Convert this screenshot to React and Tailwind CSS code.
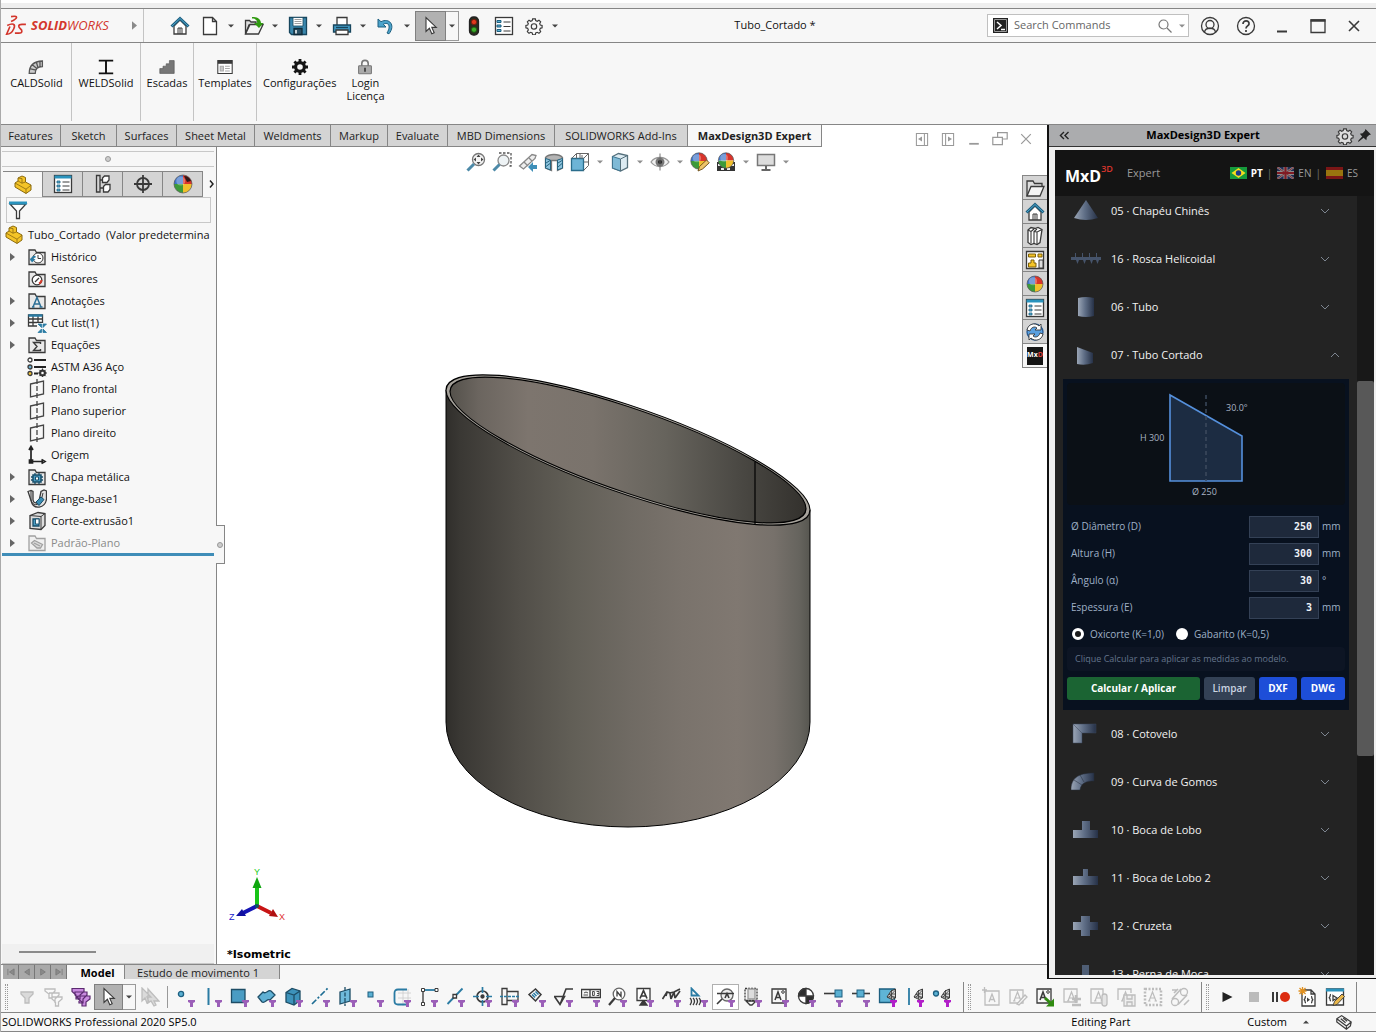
import { useState } from 'react'

const K = '#3a3a3a'
const B = '#2a7ba3'

// small purple funnel that marks the selection filters
function Funnel({ color = '#9b5fb8' }) {
    return <path d="M12 13h7v2l-2 1v4h-3v-4l-2-1z" fill={color} />
}

function Svg({ size = 20, children, className = '', dim = false }) {
    return (
        <svg
            viewBox="0 0 20 20"
            width={size}
            height={size}
            fill="none"
            stroke={K}
            strokeWidth="1.300"
            className={`shrink-0 ${dim ? 'opacity-30' : ''} ${className}`}
            aria-hidden="true"
        >
            {children}
        </svg>
    )
}

function Caret({ className = '' }) {
    return (
        <svg viewBox="0 0 6 4" width="6" height="4" className={className} aria-hidden="true">
            <path d="M0 0.500h6L3 3.500z" fill="#444" />
        </svg>
    )
}

function Sphere({ cx = 10, cy = 10, r = 8 }) {
    return (
        <g stroke="none">
            <path d={`M${cx} ${cy}V${cy - r}A${r} ${r} 0 0 1 ${cx + r} ${cy}z`} fill="#d9342b" />
            <path d={`M${cx} ${cy}H${cx + r}A${r} ${r} 0 0 1 ${cx} ${cy + r}z`} fill="#f0c02c" />
            <path d={`M${cx} ${cy}V${cy + r}A${r} ${r} 0 0 1 ${cx - r} ${cy}z`} fill="#3c9a3a" />
            <path d={`M${cx} ${cy}H${cx - r}A${r} ${r} 0 0 1 ${cx} ${cy - r}z`} fill="#3f74c9" />
            <circle cx={cx - r / 4} cy={cy - r / 3} r={r / 2} fill="#fff" opacity="0.3" />
            <circle cx={cx} cy={cy} r={r} stroke="#555" strokeWidth="0.700" />
        </g>
    )
}

function ArrowShape({ fill = '#fff' }) {
    return <path d="M5 1.500v14l3.400-3.200 2.400 5.500 2.400-1.100-2.400-5.300h4.500z" fill={fill} strokeWidth="1.100" />
}

const house = (
    <>
        <path d="M4 10v8h12v-8l-6-6z" fill="#fff" />
        <path d="M8 18v-6h4v6M10 12v6" strokeWidth="1" />
        <path d="M1.500 10.500L10 2.500l8.500 8" stroke="#1d5f80" strokeWidth="3" />
        <path d="M2 10l8-7.500L18 10" stroke="#4fa6cc" strokeWidth="1" />
    </>
)

const listPanel = (
    <>
        <rect x="1.500" y="1.500" width="17" height="17" fill="#fff" />
        <path d="M3 4.500h4v2H3zM3 9h4v2H3zM3 13.500h4v2H3z" fill="#5ab0d2" stroke="#1d5f80" strokeWidth="1" />
        <path d="M9.500 6h7M9.500 10.500h7M9.500 15h7" strokeWidth="1" />
    </>
)

const windowPanel = (
    <>
        <rect x="1.500" y="1.500" width="17" height="17" fill="#fff" />
        <path d="M1.500 3h17" stroke="#2a93bd" strokeWidth="3" />
        <path d="M4 7h3v2H4zM4 11h3v2H4zM4 15h3v2H4z" fill="#5ab0d2" stroke="#1d5f80" strokeWidth="0.800" />
        <path d="M9.500 8h7M9.500 12h7M9.500 16h7" strokeWidth="1" />
    </>
)

const gear = (
    <>
        <path d="M8.500 2h3l.4 2 1.700.7 1.900-1.200 1.900 2-1.100 1.800.7 1.700 2 .500v2.600l-2 .5-.7 1.700 1.100 1.900-1.900 1.900-1.900-1.100-1.700.7-.4 2h-3l-.5-2-1.700-.7-1.800 1.100-1.900-1.900 1.100-1.900-.7-1.700-2-.5V9.500l2-.5.7-1.700-1.100-1.800 1.900-2 1.800 1.200L8 4z" />
        <circle cx="10" cy="10.500" r="3" />
    </>
)

const folder = <path d="M2 17.500V3h6l1.500 2.500H18v12z" fill="#e9e9e9" />

const partIcon = (
    <path d="M2 8l3-2V3l4-2 3.500 1.500V7L18 10v5l-5 3.500L2 12z" fill="#f4c427" stroke="#8a6a10" strokeWidth="1" />
)

const partLines = <path d="M5 6l4 2.200v-4.600L5 3m4 5.200L12.500 7M2 8l11 6.200v4M13 14.200l5-4" stroke="#8a6a10" strokeWidth="0.800" />

const iconsTop = {
    home: house,
    doc: <path d="M3.500 1.500h9l4 4v13h-13zM12.500 1.500v4h4" fill="#fff" />,
    open: (
        <>
            <path d="M1.500 18V4.500h4L7 6h5v3l-7 0z" fill="#ddd" />
            <path d="M1.500 18L6 8.500h13L14.500 18z" fill="#f4f4f4" />
            <path d="M8 2.500c4 0 5 2 5.200 4.500H10l5 5 4.500-5h-2.500C16.500 2.500 13 1 8 1z" fill="#2f9a0f" stroke="none" />
        </>
    ),
    save: (
        <>
            <path d="M1.500 1.500h17v17h-15l-2-2z" fill="#3a87ad" stroke="#17465e" />
            <path d="M5 1.500h10V10H5z" fill="#fff" stroke="#17465e" strokeWidth="0.800" />
            <path d="M6.500 3.500h7M6.500 5.500h7M6.500 7.500h7" stroke="#888" strokeWidth="0.800" />
            <path d="M6 12.500h8v6H6z" fill="#2b5266" stroke="#102b3a" />
            <path d="M8 14v3.500" stroke="#fff" strokeWidth="1.500" />
        </>
    ),
    print: (
        <>
            <path d="M5 9V1.500h10V9" fill="#fff" />
            <path d="M1.500 9h17v7h-17z" fill="#3f96bf" stroke="#17465e" />
            <path d="M4 14h12v4.500H4z" fill="#fff" />
            <path d="M4 11.500h12" stroke="#17465e" />
        </>
    ),
    undo: (
        <path d="M2 3v8h8L7.300 8.300C12 5.500 15.500 9.500 11 17l2 .8C20 9 13 1.500 5 5.700z" fill="#4ba3cb" stroke="#1d5f80" strokeWidth="1" />
    ),
    arrow: <ArrowShape />,
    light: (
        <>
            <rect x="5.500" y="1" width="9" height="18" rx="4" fill="#2c2c1e" stroke="#222" />
            <circle cx="10" cy="6" r="2.600" fill="#e23a1d" stroke="#7a150a" strokeWidth="0.800" />
            <circle cx="10" cy="13.700" r="2.600" fill="#3fae2c" stroke="#155a0e" strokeWidth="0.800" />
        </>
    ),
    list: listPanel,
    gear,
}

const headsUp = {
    zoomFit: (
        <>
            <circle cx="12.500" cy="7.500" r="6" fill="#f4f4f4" stroke="#777" />
            <path d="M12.500 2.500l2 2.500h-4zM12.500 12.500l2-2.500h-4zM7.500 7.500l2.500-2v4zM17.500 7.500l-2.500-2v4z" fill="#444" stroke="none" />
            <path d="M8 12l-6.500 6.500" stroke="#4d8aa8" strokeWidth="3" />
        </>
    ),
    zoomArea: (
        <>
            <path d="M7 1h12v13h-3" strokeDasharray="2.500 1.500" stroke="#555" />
            <circle cx="11.500" cy="8.500" r="5.500" fill="#eef3f5" stroke="#888" />
            <path d="M7.500 12.500l-6 6" stroke="#4d8aa8" strokeWidth="3" />
        </>
    ),
    previous: (
        <>
            <path d="M1.500 14L14 2.500l4 1-1 3L5.500 17z" fill="#eee" stroke="#888" />
            <path d="M6 10l4 4M11 6l3 3" stroke="#888" />
            <path d="M19 13h-4v-3l-5 5 5 5v-3h4z" fill="#3f8fb8" stroke="none" />
        </>
    ),
    section: (
        <>
            <path d="M1.500 5.500C5 1.500 15 1.500 18.500 5.500V16l-5 2.500V8.500h-6v10l-6-2.500z" fill="#b4b4b4" stroke="#777" />
            <path d="M1.500 6.500l5 1.500v10l-5-2zM18.500 6.500l-5 1.500v10l5-2z" fill="#8cc3dd" stroke="#26637f" strokeWidth="1" />
            <path d="M2 11l4-2.500M2 14.500l4-3M14 11l4-2.500M14 15l4-3.500" stroke="#26637f" strokeWidth="1" />
        </>
    ),
    orient: (
        <>
            <path d="M1.500 6.500h12v12h-12z" fill="#6db4d6" stroke="#2a6d8c" />
            <path d="M1.500 6.500l5-5h12v12l-5 5M13.500 6.500l5-5M6.500 1.500v5M10 1.500v5M14 10h4.500M12 3v4" stroke="#666" strokeWidth="1" />
        </>
    ),
    display: (
        <>
            <path d="M2.500 4.500l6-3 9 2v12l-7 3.500-8-3z" fill="#dcebf2" stroke="#55707c" />
            <path d="M2.500 4.500l8 2.500v12l-8-3z" fill="#7fbad6" stroke="#3f7590" strokeWidth="1" />
            <path d="M10.500 7l7-3.500M10.500 7v12" stroke="#55707c" strokeWidth="1" />
        </>
    ),
    eye: (
        <>
            <path d="M1 10c4-6 14-6 18 0-4 6-14 6-18 0z" fill="#f1f1f1" stroke="#999" />
            <circle cx="10" cy="10" r="4.500" fill="#777" stroke="none" />
            <circle cx="10" cy="10" r="2" fill="#222" stroke="none" />
            <path d="M10 1.500v17" stroke="#666" strokeWidth="0.900" />
        </>
    ),
    appearance: (
        <>
            <Sphere cx={9} cy={9} r={8.2} />
            <path d="M8 19l1.500-4.500L16.500 8l2.800 2.800L12.500 17z" fill="#eec56a" stroke="#6b4d18" strokeWidth="0.900" />
        </>
    ),
    scene: (
        <>
            <path d="M1 10h18v9H1z" fill="#333" stroke="none" />
            <path d="M2 12h3v2H2zM5 16h3v2H5zM11 16h3v2h-3zM15 12h3v2h-3z" fill="#eee" stroke="none" />
            <Sphere cx={10} cy={8.5} r={7.7} />
        </>
    ),
    monitor: (
        <>
            <path d="M1.500 2.500h17v11h-17z" fill="#ddd" stroke="#777" strokeWidth="1.500" />
            <path d="M10 14v4M5.500 18h9" stroke="#666" strokeWidth="2" />
        </>
    ),
}

const treeIcons = {
    history: (
        <>
            {folder}
            <circle cx="11" cy="11" r="5" fill="#fff" strokeWidth="1" />
            <path d="M11 8v3.500h3" strokeWidth="1" />
            <path d="M4.500 13.500c0-3 2-4 4-3.500" stroke={B} strokeWidth="2" />
            <path d="M2.500 11.500l2.500 4 3.500-3.500z" fill={B} stroke="none" />
        </>
    ),
    sensor: (
        <>
            {folder}
            <circle cx="10" cy="11" r="4.800" fill="#fff" />
            <path d="M8 13l4-4" />
            <path d="M12 14.500a4 4 0 0 0 2.500-3.500" stroke="#d43a2a" strokeWidth="2" />
        </>
    ),
    note: (
        <>
            {folder}
            <path d="M6 16l4-9.500 4 9.500M7.500 13h5M5 16h2.500M12.500 16h3" stroke="#2d6f95" strokeWidth="1.500" />
        </>
    ),
    cut: (
        <>
            <path d="M1.500 2h14v11h-14zM1.500 6h14M1.500 9.500h14M6 2v11M11 2v11" fill="#fff" />
            <path d="M1.500 2.500h14" stroke={B} strokeWidth="2.500" />
            <path d="M10 10h10v10H10z" fill="#f7f7f7" stroke="none" />
            <path d="M11 11h3.500v3.500zM19.500 11H16v3.500zM11 19.500h3.500V16zM19.500 19.500H16V16z" fill={B} stroke={B} strokeWidth="0.800" />
        </>
    ),
    equation: (
        <>
            {folder}
            <path d="M13.500 9V7.500h-7l3.500 4-3.500 4h7V14" strokeWidth="1.400" />
        </>
    ),
    material: (
        <>
            <circle cx="3" cy="3" r="2" fill="#fff" />
            <circle cx="3" cy="10" r="2" fill="#67aed0" />
            <circle cx="3" cy="16.500" r="2" fill="#f1c232" />
            <path d="M7 3h12M7 10h12M7 16.500h4" stroke="#222" strokeWidth="2.200" />
            <circle cx="15.500" cy="16" r="2.500" stroke="#333" strokeWidth="2" />
            <path d="M15.500 11.500v9M11 16h9M12.300 12.800l6.400 6.400M18.700 12.800l-6.400 6.400" stroke="#333" strokeWidth="1" />
            <circle cx="15.500" cy="16" r="1.200" fill="#fff" stroke="none" />
        </>
    ),
    plane: (
        <>
            <path d="M3.500 5l13-3v13l-13 3z" stroke="#444" />
            <path d="M10 0v20" stroke="#444" strokeDasharray="5 2" />
        </>
    ),
    origin: (
        <path d="M4 3v13.500h12M2 5l2-3.500L6 5M14.500 14.500L18 16.500l-3.500 2M2.500 15h3v3h-3z" stroke="#222" strokeWidth="1.700" />
    ),
    sheet: (
        <>
            {folder}
            <path d="M6 8h8v7H6z" fill="#4a9cc3" stroke="#184f6b" strokeWidth="1.500" />
            <path d="M8 6v2M12 6v2M8 15v2M12 15v2M4 10h2M4 13h2M14 10h2M14 13h2" stroke="#184f6b" />
            <path d="M8.500 10h3v3h-3z" fill="#fff" stroke="#184f6b" strokeWidth="1" />
        </>
    ),
    flange: (
        <>
            <path d="M1 2.500L4 1.500l2 1V11c.5 3.500 5 4 6 1l2-9.500 3-1.500 2.500 1V10c-1 9-13 12-15.500 1.500z" fill="#e3e3e3" />
            <path d="M4 2v9c1 6 8 6 10 1l2-8" strokeWidth="1" />
            <path d="M9 13l5-5 3 2.500-5 6z" fill="#3a8db4" stroke="#184f6b" strokeWidth="1" />
        </>
    ),
    extrude: (
        <>
            <path d="M3 4.500l8-3 7 1v12l-4 4-11-1z" fill="#ddd" />
            <path d="M3 4.500l11 1 4-3M14 5.500v13" strokeWidth="1" />
            <path d="M6 8h6v7H6z" fill="#4a9cc3" stroke="#184f6b" />
            <path d="M8.500 8H12v5H8.500z" fill="#fff" stroke="#184f6b" strokeWidth="0.900" />
        </>
    ),
    flat: (
        <g opacity="0.450">
            {folder}
            <path d="M4.500 10l3-2.500 8 4-2 3.500H10z" fill="#bbb" />
            <path d="M7 10l6 3" />
        </g>
    ),
}

const tree = [
    { label: 'Histórico', icon: 'history', open: true },
    { label: 'Sensores', icon: 'sensor' },
    { label: 'Anotações', icon: 'note', open: true },
    { label: 'Cut list(1)', icon: 'cut', open: true },
    { label: 'Equações', icon: 'equation', open: true },
    { label: 'ASTM A36 Aço', icon: 'material' },
    { label: 'Plano frontal', icon: 'plane' },
    { label: 'Plano superior', icon: 'plane' },
    { label: 'Plano direito', icon: 'plane' },
    { label: 'Origem', icon: 'origin' },
    { label: 'Chapa metálica', icon: 'sheet', open: true },
    { label: 'Flange-base1', icon: 'flange', open: true },
    { label: 'Corte-extrusão1', icon: 'extrude', open: true },
    { label: 'Padrão-Plano', icon: 'flat', open: true },
]

const box = (x, y, s) => <rect x={x} y={y} width={s} height={s} fill="#5ab0d2" stroke="#1d5f80" strokeWidth="1" />

const mesh = (
    <>
        <path d="M9 10l4-6 4.500-2V11L14 12.500z" fill="#ddd" strokeWidth="1" />
        <path d="M9 10h8.500M11 7h6.500M13.500 3v9M11 7l6 4M17.500 3L11 10" strokeWidth="0.800" />
    </>
)

const letterA = <path d="M6 14l3.500-9 3.500 9M7.500 11h4M5 14h2.500M11.500 14h2.500" strokeWidth="1.200" />

const filters = [
    { name: 'Vértices', art: <circle cx="5" cy="7" r="2.600" fill="#5ab0d2" stroke="#1d5f80" /> },
    { name: 'Arestas', art: <path d="M5.500 1v17" stroke={B} strokeWidth="2" /> },
    { name: 'Faces', art: <path d="M1.500 2.500h13.500v13H1.500z" fill="#4a9cc3" stroke="#1d4d66" /> },
    { name: 'Superfícies', art: <path d="M1 10l5-5c3 3 5-3 8-1l4 4-5 5c-3-2-5 4-8 2z" fill="#5fb0d4" stroke="#1d4d66" /> },
    {
        name: 'Sólidos',
        art: (
            <>
                <path d="M2 5.500l6-4 8 2.500v9.500l-6 4.500-8-3z" fill="#3d93bb" stroke="#1d4d66" />
                <path d="M2 5.500L10 8l6-4M10 8v10" stroke="#1d4d66" />
            </>
        ),
    },
    { name: 'Eixos', art: <path d="M1 17L17 1" stroke="#1d6d93" strokeWidth="1.700" strokeDasharray="6 2 2 2" /> },
    {
        name: 'Planos',
        art: (
            <>
                <path d="M2 5l10-3v12L2 17z" fill="#6fbadb" stroke="#1d4d66" />
                <path d="M7 0v19" stroke="#1d4d66" strokeDasharray="4 1.500" />
            </>
        ),
    },
    { name: 'Pontos', art: box(3, 5, 5) },
    {
        name: 'Esboços',
        art: (
            <>
                <path d="M6 6h13M6 11h13M11 2v17M16 2v17" stroke="#ccc" strokeWidth="0.800" />
                <path d="M15 2.500H6Q2.500 2.500 2.500 6v8q0 3.500 3.500 3.500h9" stroke="#2a7ba3" strokeWidth="1.800" />
            </>
        ),
    },
    {
        name: 'Segmentos',
        art: (
            <>
                <path d="M4 3v14" />
                <path d="M4 3h13" stroke={B} strokeWidth="1.800" />
                <path d="M2.500 1.500h3v3h-3zM16 1.500h3v3h-3zM2.500 15.500h3v3h-3z" fill="#fff" strokeWidth="1" />
            </>
        ),
    },
    {
        name: 'Pontos médios',
        art: (
            <>
                <path d="M1.500 17L16.500 1.500" stroke={B} strokeWidth="1.800" />
                <path d="M7 7.500h3.500V11H7z" fill="#fff" />
            </>
        ),
    },
    {
        name: 'Marcas de centro',
        art: (
            <>
                <circle cx="9.500" cy="9.500" r="5.500" strokeWidth="1.700" />
                <path d="M9.500 0v6M9.500 13v6M0 9.500h6M13 9.500h6" stroke={B} strokeWidth="1.700" />
                <circle cx="9.500" cy="9.500" r="1.500" fill={K} />
            </>
        ),
    },
    {
        name: 'Linhas de centro',
        art: (
            <>
                <path d="M2 1.500h5v16H2zM7 4.500h11v9H7" />
                <path d="M0 9.500h19" stroke={B} strokeDasharray="3 1" />
            </>
        ),
    },
    {
        name: 'Cotas',
        art: (
            <>
                <path d="M2 7.500L8.500 2 14 7.500 8.500 14z" strokeWidth="1.500" />
                <path d="M5 7.500l3 3M6.500 6l3 3M8.500 4.500l3 3" stroke={B} strokeWidth="1.500" />
            </>
        ),
    },
    { name: 'Acabamento', art: <path d="M0.500 9.500h10L6 17.500zM6 17.500l6-15.500h7" strokeWidth="1.600" /> },
    {
        name: 'Tolerâncias',
        art: (
            <>
                <path d="M0.500 2.500h19v8h-19zM9 2.500v8" />
                <path d="M2.500 8h4.500M3 6q2-2 4 0M11.500 4.500h1.800v4h-1.800zM15.500 4.500H18v4h-2.500M16 6.500h2" strokeWidth="0.900" />
            </>
        ),
    },
    {
        name: 'Notas',
        art: (
            <>
                <circle cx="11" cy="7" r="5.800" fill="#fff" stroke="#666" />
                <path d="M9 9.500v-5l4 5v-5" />
                <path d="M7 11l-6 7" strokeWidth="2.200" />
            </>
        ),
    },
    {
        name: 'Texto',
        art: (
            <>
                <path d="M2 1.500h13v12H2z" fill="#fff" />
                <path d="M5 11.500l3.500-8 3.500 8M6.500 9h4" strokeWidth="1.700" />
                <path d="M8 14l-3 4h7l-3-4z" fill={K} />
            </>
        ),
    },
    { name: 'Soldas', art: <path d="M0.500 12L5 5l3 1 1 6M5 5l-1 4M8 6l4-1 1 6M12 5l6-3M12 5l-3 7M13 11l5-7" strokeWidth="1.700" /> },
    {
        name: 'Cordões',
        art: (
            <>
                <path d="M2.500 1.500v7H9.500z" stroke={B} strokeWidth="1.800" />
                <path d="M1 11q3 3 0 7M4 11q3 3 0 7M7 11q3 3 0 7M10 11q3 3 0 7" />
            </>
        ),
    },
    {
        name: 'Detalhes',
        on: true,
        art: (
            <>
                <circle cx="11" cy="8" r="6" fill="#eee" stroke="#666" />
                <path d="M1 6.500h17M9 11l2-4.500 2 4.500M6 12l-5 5" strokeWidth="1.600" />
            </>
        ),
    },
    {
        name: 'Furos',
        art: (
            <>
                <path d="M2 1.500h12v12H2z" strokeDasharray="2 1" />
                <path d="M5 2h7v10H5z" fill="#ddd" stroke="#999" />
                <path d="M3 14h10l-4 4H7z" />
            </>
        ),
    },
    {
        name: 'Blocos',
        art: (
            <>
                <path d="M2 2h14v14H2z" />
                <path d="M5 13l3-8 3 8M6 10.500h4" strokeWidth="1.500" />
                <circle cx="13" cy="5" r="1.300" strokeWidth="1" />
            </>
        ),
    },
    {
        name: 'Centro de massa',
        art: (
            <>
                <circle cx="9" cy="9" r="7.500" fill="#fff" />
                <path d="M9 9V1.500A7.500 7.500 0 0 0 1.500 9zM9 9v7.500A7.500 7.500 0 0 0 16.500 9z" fill="#2d2d2d" />
            </>
        ),
    },
    { name: 'Conexão', art: <><path d="M0 6.500h11" strokeWidth="1.600" />{box(11, 3, 7)}</> },
    { name: 'Rota', art: <><path d="M1 6.500h18" strokeWidth="1.600" />{box(6, 3, 7)}</> },
    {
        name: 'Malha de face',
        pink: true,
        art: (
            <>
                <path d="M1.500 2h15v13.500H1.500z" fill="#5fb4d6" stroke="#1d5f80" />
                {mesh}
            </>
        ),
    },
    { name: 'Malha de aresta', pink: true, art: <><path d="M4 1v17" stroke={B} strokeWidth="1.800" />{mesh}</> },
    {
        name: 'Malha de vértice',
        pink: true,
        art: (
            <>
                <circle cx="4" cy="6.500" r="2.500" fill="#5ab0d2" stroke="#1d5f80" />
                {mesh}
            </>
        ),
    },
]

const annotations = [
    { name: 'Nova nota', dim: true, art: <><path d="M4 4h14v14H4z" /><path d="M8 15l3-8 3 8M9 12.500h4M1 3h5M3.500 0v6" /></> },
    { name: 'Editar nota', dim: true, art: <><path d="M2 3h13v13H2z" />{letterA}<path d="M9 17l8-9 2 2-8 8z" fill="#fff" /></> },
    {
        name: 'Inserir nota',
        art: (
            <>
                <path d="M2 2h14v14H2z" />
                <path d="M5 13l3-8 3 8M6 10.500h4" strokeWidth="1.600" />
                <circle cx="13" cy="5" r="1.300" strokeWidth="1" />
                <path d="M11 10l5 4.500 3-3v8h-8l3-3-5-4.500z" fill="#2f8a0f" stroke="none" />
            </>
        ),
    },
    { name: 'Adicionar', dim: true, art: <><path d="M2 2h13v13H2z" />{letterA}<path d="M14 8v8M10 12h9M10 18h9" strokeWidth="2.500" /></> },
    { name: 'Anexar', dim: true, art: <><path d="M2 2h12v14H2z" />{letterA}<rect x="13" y="7" width="5" height="12" rx="2.500" fill="#bbb" /></> },
    { name: 'Salvar', dim: true, art: <><path d="M2 13V2h13v4" />{letterA}<path d="M8 8h11v11H8z" fill="#ddd" /><path d="M11 8v4h5V8M11 19v-4h5v4" /></> },
    { name: 'Moldura', dim: true, art: <><path d="M2 2h16v16H2z" strokeWidth="2.500" strokeDasharray="2 1.500" />{letterA}</> },
    { name: 'Vincular', dim: true, art: <><circle cx="5" cy="15" r="3.500" /><circle cx="14" cy="5" r="3.500" /><path d="M2 12L11 2M8 17.500l9-9.500M2 3h5M4 6l4-4M14 18l5-5" strokeWidth="1.600" /></> },
]

const ribbon = [
    {
        label: 'CALDSolid',
        width: 'w-[70px]',
        art: <path d="M1.500 18c0-8 4-15 16.500-15.500v7c-6 0-9 3-9 8.500zM2 12l8 2M5 7l6 5M10.500 4l2 7M15 3v7" fill="#ccc" stroke="#555" strokeWidth="1.600" />,
    },
    {
        label: 'WELDSolid',
        width: 'w-[69px]',
        art: <path d="M1 2h18M1 18h18M10 2v16" stroke="#111" strokeWidth="2.400" />,
    },
    {
        label: 'Escadas',
        width: 'w-[53px]',
        art: <path d="M1 18v-6h4V9h4V6h4V2h6v16z" fill="#777" stroke="#555" strokeWidth="0.800" />,
    },
    {
        label: 'Templates',
        width: 'w-[63px]',
        art: (
            <>
                <path d="M1 2h18v16H1z" fill="#fff" />
                <path d="M1 4h18" strokeWidth="4" />
                <path d="M4 9h4v6H4zM10 9h6M10 12h6M10 15h6" stroke="#aaa" fill="#ccc" />
            </>
        ),
    },
]

function RibbonButton({ label, art }) {
    return (
        <button type="button" className="flex flex-col items-center text-[11px] leading-[13px]">
            <Svg size={16} className="mb-px">{art}</Svg>
            {label}
        </button>
    )
}

function IconButton({ name, children, className = '' }) {
    return (
        <button type="button" aria-label={name} className={`flex items-center justify-center ${className}`}>
            {children}
        </button>
    )
}

function TitleBar() {
    return (
        <header className="flex h-[34px] shrink-0 items-center border-b border-[#868686]">
            <div className="flex h-full w-[143px] items-center border-r border-[#c4c4c4] pl-1 text-[#d3362c]">
                <svg viewBox="0 0 20 20" width="22" height="22" fill="none" stroke="#d3362c" strokeWidth="1.500" aria-hidden="true">
                    <path d="M5.500 1.500c3-.5 5-.5 5 .500s-2 2.500-5 4M2 9.500c5-2.500 8-1.500 6 3-1.500 3.500-4 5-6.500 5l3-7M19 8.500h-3.500c-4 0-3.500 2.500-1.500 4s2 4-1.500 4H9" />
                </svg>
                <span className="pl-1 text-[13px] italic">
                    <b>SOLID</b>WORKS
                </span>
                <svg viewBox="0 0 6 10" width="5" height="9" className="mr-[6px] ml-auto" aria-hidden="true">
                    <path d="M0 0l6 5-6 5z" fill="#8a8a8a" />
                </svg>
            </div>
            <div className="flex items-center gap-[6px] pl-6">
                <IconButton name="Início" className="w-6"><Svg>{iconsTop.home}</Svg></IconButton>
                <div className="flex gap-[3px]">
                    {['doc', 'open', 'save', 'print', 'undo'].map((id) => (
                        <IconButton key={id} name={id}>
                            <span className="flex w-6 justify-center"><Svg>{iconsTop[id]}</Svg></span>
                            <span className="flex w-[17px] justify-center"><Caret /></span>
                        </IconButton>
                    ))}
                </div>
            </div>
            <IconButton name="Selecionar" className="h-[30px] w-[31px] border border-[#808080] bg-[#b1b1b1]">
                <Svg>{iconsTop.arrow}</Svg>
            </IconButton>
            <IconButton name="Opções de seleção" className="h-[30px] w-[13px] border border-l-0 border-[#9a9a9a]"><Caret /></IconButton>
            <div className="flex gap-[6px] pl-[3px]">
                <IconButton name="Reconstruir" className="w-6"><Svg>{iconsTop.light}</Svg></IconButton>
                <IconButton name="Propriedades" className="w-6"><Svg>{iconsTop.list}</Svg></IconButton>
                <IconButton name="Opções"><span className="flex w-6 justify-center"><Svg size={18}>{iconsTop.gear}</Svg></span>
                    <span className="flex w-[17px] justify-center"><Caret /></span>
                </IconButton>
            </div>
            <h1 className="flex-1 text-center text-[11px]">Tubo_Cortado *</h1>
            <label className="flex h-[23px] w-[202px] items-center border border-[#c0c0c0] bg-white pr-[3px] pl-[5px]">
                <svg viewBox="0 0 15 15" width="15" height="15" aria-hidden="true">
                    <path d="M0 0h15v15H0z" fill="#222" />
                    <path d="M1.500 1.500h12v12h-12z" fill="none" stroke="#999" />
                    <path d="M4 4l4 3.500L4 11M8 11.500h4" fill="none" stroke="#fff" strokeWidth="1.500" />
                </svg>
                <input type="search" aria-label="Search Commands" placeholder="Search Commands" className="min-w-0 flex-1 pl-[6px] text-[11px] outline-none placeholder:text-[#666]" />
                <svg viewBox="0 0 14 14" width="14" height="14" fill="none" stroke="#777" strokeWidth="1.200" aria-hidden="true">
                    <circle cx="5.500" cy="5.500" r="4.500" />
                    <path d="M9 9l4.500 4.500" />
                </svg>
                <Caret className="ml-[7px] opacity-60" />
            </label>
            <div className="flex pr-1 pl-[3px]">
                <IconButton name="Conta" className="w-9">
                    <Svg><circle cx="10" cy="10" r="8.500" /><circle cx="10" cy="8.500" r="4" /><path d="M4.500 16c1-5 10-5 11 0" /></Svg>
                </IconButton>
                <IconButton name="Ajuda" className="w-9">
                    <Svg><circle cx="10" cy="10" r="8.500" /><path d="M7 8c0-4.500 6.500-4 6 0-.3 2-3 2-3 4.500M10 14v2" strokeWidth="1.700" /></Svg>
                </IconButton>
                <IconButton name="Minimizar" className="w-9"><Svg><path d="M5 15.500h10" strokeWidth="2" /></Svg></IconButton>
                <IconButton name="Maximizar" className="w-9"><Svg><path d="M3 4h14v12.500H3z" /><path d="M2.500 4.500h15" strokeWidth="2.500" /></Svg></IconButton>
                <IconButton name="Fechar" className="w-9"><Svg><path d="M5 5l10 10M15 5L5 15" strokeWidth="1.600" /></Svg></IconButton>
            </div>
        </header>
    )
}

function Ribbon() {
    return (
        <div className="flex h-[82px] shrink-0 border-b border-[#868686] pb-[3px] pl-px">
            {ribbon.map((item) => (
                <div key={item.label} className={`flex justify-center border-r border-[#c4c4c4] pt-4 ${item.width}`}>
                    <RibbonButton {...item} />
                </div>
            ))}
            <div className="flex items-start gap-[10px] pt-4 pl-[6px]">
                <RibbonButton
                    label="Configurações"
                    art={
                        <>
                            <circle cx="10" cy="10" r="5.500" stroke="#151515" strokeWidth="4" />
                            <path d="M10 0v4M10 16v4M0 10h4M16 10h4M3 3l3 3M14 14l3 3M17 3l-3 3M6 14l-3 3" stroke="#151515" strokeWidth="3.500" />
                        </>
                    }
                />
                <RibbonButton
                    label={<>Login<br />Licença</>}
                    art={
                        <>
                            <path d="M6 9V5.500c0-5 8-5 8 0V9" stroke="#777" strokeWidth="2" />
                            <rect x="2" y="8.500" width="16" height="10" rx="1" fill="#aaa" stroke="#777" />
                            <path d="M10 11v5" stroke="#333" strokeWidth="2" />
                        </>
                    }
                />
            </div>
        </div>
    )
}

const commandTabs = [
    { label: 'Features', width: 'w-[60px]' },
    { label: 'Sketch', width: 'w-[56px]' },
    { label: 'Surfaces', width: 'w-[60px]' },
    { label: 'Sheet Metal', width: 'w-[78px]' },
    { label: 'Weldments', width: 'w-[76px]' },
    { label: 'Markup', width: 'w-[57px]' },
    { label: 'Evaluate', width: 'w-[60px]' },
    { label: 'MBD Dimensions', width: 'w-[107px]' },
    { label: 'SOLIDWORKS Add-Ins', width: 'w-[133px]' },
]

function CommandTabs() {
    return (
        <div className="flex h-[22px] shrink-0 bg-white text-[11px] leading-[21px] text-[#222]">
            {commandTabs.map((tab) => (
                <button key={tab.label} type="button" className={`border-r border-b border-[#868686] bg-[#d4d4d4] whitespace-nowrap ${tab.width}`}>
                    {tab.label}
                </button>
            ))}
            <button type="button" className="w-[134px] border-r border-b border-[#868686] bg-[#f7f7f7] font-bold whitespace-nowrap">
                MaxDesign3D Expert
            </button>
            <div className="ml-auto flex items-end pr-2">
                <IconButton name="Painel esquerdo" className="w-[26px]">
                    <Svg size={16}><path d="M3 3h14v15H3zM13 3v15" stroke="#999" /><path d="M10 7v6l-5-3z" fill="#999" stroke="none" /></Svg>
                </IconButton>
                <IconButton name="Painel direito" className="w-[26px]">
                    <Svg size={16}><path d="M3 3h14v15H3zM7 3v15" stroke="#999" /><path d="M10 7v6l5-3z" fill="#999" stroke="none" /></Svg>
                </IconButton>
                <IconButton name="Minimizar documento" className="w-[26px]"><Svg size={16}><path d="M4 16h12" stroke="#999" strokeWidth="2.200" /></Svg></IconButton>
                <IconButton name="Restaurar documento" className="w-[26px]"><Svg size={16}><path d="M7 8V2h12v8h-6M1 8h12v9H1z" stroke="#999" strokeWidth="1.500" /></Svg></IconButton>
                <IconButton name="Fechar documento" className="w-[26px]"><Svg size={16}><path d="M4 4l12 12M16 4L4 16" stroke="#999" strokeWidth="1.500" /></Svg></IconButton>
            </div>
        </div>
    )
}

const managerTabs = [
    { name: 'FeatureManager', art: <>{partIcon}{partLines}</> },
    { name: 'PropertyManager', art: windowPanel },
    { name: 'ConfigurationManager', art: <><path d="M3.500 1.500H7V18H3.500zM7 6h3M7 14h4" /><path d="M9.500 4l2-2h4.500v4l-2 2.500H9.500zM10.500 12.500l2-2H17v5l-2 2.500h-4.500z" fill="#fff" /></> },
    { name: 'DimXpertManager', art: <><circle cx="10" cy="10" r="6" strokeWidth="1.800" /><path d="M10 1v18M1 10h18" strokeWidth="1.800" /></> },
    { name: 'DisplayManager', art: <><Sphere r={9} /><path d="M11 2l3 6 4-1q-2-5-7-5z" fill="#301818" stroke="none" /></> },
]

function FeatureTree() {
    return (
        <aside className="flex w-[216px] shrink-0 flex-col overflow-hidden border-r border-[#868686] pr-[2px] pl-px">
            <div className="mt-1 flex h-[16px] items-center justify-center border-y border-[#c8c8c8]">
                <span className="size-[6px] rounded-full border border-[#999] bg-[#ccc]" />
            </div>
            <div className="mt-1 flex h-[26px] pl-px">
                {managerTabs.map((tab, i) => (
                    <IconButton
                        key={tab.name}
                        name={tab.name}
                        className={`w-10 border-t border-[#868686] ${i ? 'border-r border-b bg-[#d4d4d4]' : 'border-r'}`}
                    >
                        <Svg>{tab.art}</Svg>
                    </IconButton>
                ))}
                <IconButton name="Mais abas" className="ml-auto w-[6px]">
                    <svg viewBox="0 0 5 8" width="5" height="8" fill="none" stroke="#222" strokeWidth="1.500" aria-hidden="true"><path d="M1 0.500L4 4 1 7.500" /></svg>
                </IconButton>
            </div>
            <label className="mr-[3px] ml-1 flex h-[26px] items-center border border-[#c8c8c8]">
                <Svg className="ml-px">
                    <path d="M2 4l6.500 7v7.500h3V11L18 4z" fill="#fff" />
                    <path d="M1 3h18" stroke="#2a93bd" strokeWidth="3" />
                </Svg>
                <input type="text" aria-label="Filtrar árvore" className="min-w-0 flex-1 px-1 text-[11px] outline-none" />
            </label>
            <div className="flex h-[22px] items-center pt-0.5 pl-[2px] text-[11px] whitespace-pre">
                <Svg className="mr-1">{partIcon}{partLines}</Svg>
                Tubo_Cortado  (Valor predetermina
            </div>
            <ul className="border-b-[3px] border-[#3f8db8] text-[11px]">
                {tree.map((node) => (
                    <li key={node.label} className="flex h-[22px] items-center pt-0.5 pl-2 last:text-[#8a8a8a]">
                        <span className="w-[17px]">
                            {node.open && (
                                <svg viewBox="0 0 5 8" width="5" height="8" aria-hidden="true"><path d="M0 0l5 4-5 4z" fill="#666" /></svg>
                            )}
                        </span>
                        <Svg className="mr-1">{treeIcons[node.icon]}</Svg>
                        {node.label}
                    </li>
                ))}
            </ul>
            <div className="mt-auto flex h-[20px] items-center border-b border-[#c8c8c8] bg-[#f0f0f0] pl-[17px]">
                <span className="-mt-1 h-[2px] w-[77px] bg-[#8a8a8a]" />
            </div>
        </aside>
    )
}

function TubeModel() {
    // the cut plane skews the rim: y grows with x across the mouth
    const rim = 'translate(411 303) matrix(1 0.329 0 1 0 0)'
    return (
        <svg viewBox="0 0 830 817" className="absolute inset-0 h-full w-full" role="img" aria-label="Tubo cortado">
            <defs>
                <linearGradient id="outer">
                    <stop offset="0" stopColor="#302e2b" />
                    <stop offset="0.040" stopColor="#3a3834" />
                    <stop offset="0.200" stopColor="#514e48" />
                    <stop offset="0.350" stopColor="#625f57" />
                    <stop offset="0.500" stopColor="#6f6a63" />
                    <stop offset="0.650" stopColor="#7a736c" />
                    <stop offset="0.800" stopColor="#807871" />
                    <stop offset="0.900" stopColor="#77716b" />
                    <stop offset="0.970" stopColor="#66645e" />
                    <stop offset="1" stopColor="#575650" />
                </linearGradient>
                <linearGradient id="inner">
                    <stop offset="0" stopColor="#54514b" />
                    <stop offset="0.080" stopColor="#6b655f" />
                    <stop offset="0.220" stopColor="#7d756e" />
                    <stop offset="0.400" stopColor="#7a736c" />
                    <stop offset="0.600" stopColor="#67645d" />
                    <stop offset="0.800" stopColor="#4c4a45" />
                    <stop offset="1" stopColor="#33312d" />
                </linearGradient>
            </defs>
            <path d="M229 243V575A182 105 0 0 0 593 575V363L411 303z" fill="url(#outer)" stroke="#000" />
            <ellipse rx="182" ry="45.500" transform={rim} fill="#a6a29b" stroke="#000" strokeWidth="1.200" />
            <ellipse rx="178" ry="43.500" transform={rim} fill="url(#inner)" stroke="#000" strokeWidth="1.200" />
            <path d="M538 315v62" stroke="#000" strokeWidth="1.200" />
        </svg>
    )
}

const headsUpItems = [
    ['zoomFit'], ['zoomArea'], ['previous'], ['section'], ['orient', true], ['display', true],
    ['eye', true], ['appearance'], ['scene', true], ['monitor', true],
]

const sideTabs = [
    { name: 'Biblioteca', art: <><path d="M2 18V3h6l1.500 2.500H17V9" fill="#ddd" /><path d="M2 18L6 8.500h13L15 18z" fill="#f4f4f4" /></> },
    { name: 'Recursos', art: house },
    { name: 'Catálogo', art: <><path d="M3 4l3-2.500 4 1 3-1 4 2-2 13-3 2-3-1-3 1-3-2z" fill="#fff" /><path d="M3 4l3 1.500v12M6 5.500l3-2.500M9 18V5.500L12 3M12 18.500V6l5-2.500M12 6L9 5.500" strokeWidth="1.100" /></> },
    { name: 'Paleta', art: <><path d="M1.500 1.500h17v17h-17z" fill="#fff" /><path d="M3.500 4h7v3h-7zM13 4h4v3h-4zM6 10h3v3h2v4H3.500v-4H6z" fill="#f4c427" stroke="#7d5f08" strokeWidth="1" /><path d="M14 10h4v8h-4z" fill="#ddd" strokeWidth="1" /></> },
    { name: 'Aparências', art: <Sphere r={8} /> },
    { name: 'Propriedades personalizadas', art: windowPanel },
    { name: 'Fórum', art: <><circle cx="10" cy="10" r="8" fill="#5aa0e0" stroke="#275a94" /><path d="M2 8c1-6 8-8 12-4l2-2v6h-6l2-2c-2-2-6-1-7 3zM18 12c-1 6-8 8-12 4l-2 2v-6h6l-2 2c2 2 6 1 7-3z" fill="#fff" strokeWidth="0.900" /></> },
]

function Viewport() {
    return (
        <main className="relative flex-1 bg-white">
            <TubeModel />
            <div className="relative flex h-[30px] items-center justify-center pr-[8px]">
                {headsUpItems.map(([id, menu]) => (
                    <IconButton key={id} name={id}>
                        <span className="flex w-[26px] justify-center"><Svg>{headsUp[id]}</Svg></span>
                        {menu && <span className="flex w-[14px] justify-center"><Caret className="opacity-60" /></span>}
                    </IconButton>
                ))}
            </div>
            <div className="absolute top-[378px] -left-px flex h-[39px] w-[9px] items-center border border-l-0 border-[#868686] bg-[#f7f7f7] pl-px">
                <span className="size-[6px] rounded-full border border-[#999] bg-[#ccc]" />
            </div>
            <div className="absolute bottom-[42px] left-3">
                <svg viewBox="0 0 60 58" width="60" height="58" aria-hidden="true">
                    <path d="M28 43V24" stroke="#18c418" strokeWidth="4" />
                    <path d="M23.500 24L28 13l4.500 11z" fill="#0fa60f" />
                    <path d="M28 42L14 49" stroke="#1414b4" strokeWidth="4" />
                    <path d="M7 52l6-7 4 7z" fill="#1010a0" />
                    <path d="M28 42l14 7" stroke="#c81414" strokeWidth="4" />
                    <path d="M49 53l-9-1 4-7z" fill="#b01010" />
                    <circle cx="28" cy="42" r="2" fill="#0a5560" />
                    <g fontFamily="Liberation Sans" fontSize="9">
                        <text x="25" y="11" fill="#22cc22">Y</text>
                        <text x="0" y="56" fill="#2222cc">Z</text>
                        <text x="50" y="56" fill="#e03030">X</text>
                    </g>
                </svg>
            </div>
            <p className="absolute bottom-px left-[10px] font-['DejaVu_Sans'] text-[11px] leading-[16px] font-bold text-black">*Isometric</p>
            <nav className="absolute top-[28px] right-0 w-[25px] border-t border-l border-[#868686]">
                {sideTabs.map((tab) => (
                    <IconButton key={tab.name} name={tab.name} className="h-6 w-full border-b border-[#868686] bg-[#d4d4d4]">
                        <Svg>{tab.art}</Svg>
                    </IconButton>
                ))}
                <button type="button" className="flex h-6 w-full items-center justify-center border-b border-[#868686] bg-[#f7f7f7]">
                    <span className="flex h-[18px] w-4 items-center justify-center bg-[#151515] text-[7px] font-bold text-white">
                        Mx<span className="text-[#e04040]">D</span>
                    </span>
                </button>
            </nav>
        </main>
    )
}

function ModelTabs() {
    return (
        <div className="flex h-[15px] shrink-0 border-t border-[#868686] pl-[2px] text-[11px] leading-[13px]">
            {['M5 3v8M13 3L7 7l6 4z', 'M12 3L6 7l6 4z', 'M6 3l6 4-6 4z', 'M13 3v8M5 3l6 4-6 4z'].map((d) => (
                <IconButton key={d} name="Navegar abas" className="w-4 border-r border-[#777] bg-[#a9a9a9]">
                    <svg viewBox="0 0 18 14" width="14" height="12" fill="#8a8a8a" stroke="#777" aria-hidden="true"><path d={d} /></svg>
                </IconButton>
            ))}
            <button type="button" className="w-[58px] border-r border-[#868686] pl-1 font-bold text-black">Model</button>
            <button type="button" className="w-[155px] border-r border-[#868686] bg-[#d4d4d4] pr-2 whitespace-nowrap text-[#222]">Estudo de movimento 1</button>
        </div>
    )
}

const steel = 'url(#steel)'
const pieces = {
    cone: <path d="M15 0L27 18q-12 4-24 0z" fill={steel} />,
    screw: <path d="M0 9h30v3H0zM5 12h3l-1.500 4zM12 12h3l-1.500 4zM19 12h3l-1.500 4zM25 12h3l-1.500 4zM4 9V5h1v4zM11 9V5h1v4zM18 9V5h1v4zM25 9V5h1v4z" fill="#46546b" />,
    tube: <path d="M7 2q8-2 16 0v18q-8 2-16 0z" fill={steel} />,
    cut: <path d="M6 3l16 6v10q-8 3-16 1z" fill={steel} />,
    elbow: <path d="M2 1h23v9H11v10H2zM2 1l9 9" fill={steel} stroke="#3a4558" strokeWidth="0.500" />,
    bend: <path d="M0 19C0 8 6 2 23 2v8c-8 0-13 2-14 9zM3 9l8 5M9 4l4 7" fill={steel} stroke="#252d3b" strokeWidth="0.500" />,
    tee: <path d="M2 11h9V2h8v9h8v8H2z" fill={steel} />,
    tee2: <path d="M2 9h10V2h5v7h10v9H2z" fill={steel} />,
    cross: <path d="M2 7h8V1h9v6h8v8h-8v6h-9v-6H2z" fill={steel} />,
    leg: <path d="M11 2h7v19h-7z" fill="#4e5d74" />,
}

const before = [
    { id: '05', name: 'Chapéu Chinês', piece: 'cone' },
    { id: '16', name: 'Rosca Helicoidal', piece: 'screw' },
    { id: '06', name: 'Tubo', piece: 'tube' },
    { id: '07', name: 'Tubo Cortado', piece: 'cut' },
]

const after = [
    { id: '08', name: 'Cotovelo', piece: 'elbow' },
    { id: '09', name: 'Curva de Gomos', piece: 'bend' },
    { id: '10', name: 'Boca de Lobo', piece: 'tee' },
    { id: '11', name: 'Boca de Lobo 2', piece: 'tee2' },
    { id: '12', name: 'Cruzeta', piece: 'cross' },
    { id: '13', name: 'Perna de Moça', piece: 'leg' },
]

function PieceRow({ item, open, onClick }) {
    return (
        <button type="button" onClick={onClick} aria-expanded={open} className="flex h-12 w-full shrink-0 items-center pl-4 text-left text-[11px] text-[#f2f2f2]">
            <svg viewBox="0 0 30 22" width="30" height="22" className="mr-[10px]" aria-hidden="true">
                <defs>
                    <linearGradient id="steel">
                        <stop offset="0" stopColor="#9aa5b5" />
                        <stop offset="0.450" stopColor="#5f6e86" />
                        <stop offset="1" stopColor="#263147" />
                    </linearGradient>
                </defs>
                {pieces[item.piece]}
            </svg>
            <span className="flex-1">{item.id} · {item.name}</span>
            <svg viewBox="0 0 10 6" width="10" height="6" fill="none" stroke="#7d8590" className={open ? 'mr-[17px]' : 'mr-[27px]'} aria-hidden="true">
                <path d={open ? 'M1 5l4-4 4 4' : 'M1 1l4 4 4-4'} />
            </svg>
        </button>
    )
}

const fieldDefs = [
    { id: 'diametro', label: 'Ø Diâmetro (D)', unit: 'mm' },
    { id: 'altura', label: 'Altura (H)', unit: 'mm' },
    { id: 'angulo', label: 'Ângulo (α)', unit: '°' },
    { id: 'espessura', label: 'Espessura (E)', unit: 'mm' },
]

function TubeForm() {
    const [values, setValues] = useState({ diametro: '250', altura: '300', angulo: '30', espessura: '3' })
    const [mode, setMode] = useState('oxicorte')

    return (
        <form onSubmit={(e) => e.preventDefault()} className="mx-2 bg-[#08111f] px-1 pt-1 pb-[10px] text-[10px] text-[#9fb0c6]">
            <div className="mb-2 flex h-[122px] justify-center rounded bg-[#0b1016]">
                <svg viewBox="0 0 278 122" width="278" height="122" fontFamily="Open Sans" fontSize="9" fill="#a9b4c4">
                    <path d="M103 12l72 41v45h-72z" fill="#1c2c42" stroke="#5590dc" strokeWidth="1.600" />
                    <path d="M139 12v86" stroke="#3c4a5e" strokeWidth="1.500" strokeDasharray="4 3" />
                    <text x="73" y="58">H 300</text>
                    <text x="159" y="28">30.0°</text>
                    <text x="125" y="112">Ø 250</text>
                </svg>
            </div>
            {fieldDefs.map((field) => (
                <div key={field.id} className="flex h-[27px] items-center pl-1">
                    <label htmlFor={field.id} className="flex-1">{field.label}</label>
                    <input
                        id={field.id}
                        type="text"
                        value={values[field.id]}
                        onChange={(e) => setValues({ ...values, [field.id]: e.target.value })}
                        className="h-[22px] w-[70px] border border-[#344156] bg-[#1e293b] px-[6px] text-right font-['DejaVu_Sans_Mono',monospace] text-[10px] font-bold text-[#eef2f8]"
                    />
                    <span className="w-[26px] pl-[3px]">{field.unit}</span>
                </div>
            ))}
            <div className="flex h-[26px] items-center gap-3 pl-[5px]">
                {[['oxicorte', 'Oxicorte (K=1,0)'], ['gabarito', 'Gabarito (K=0,5)']].map(([id, label]) => (
                    <label key={id} className="flex items-center gap-[6px]">
                        <input
                            type="radio"
                            name="modo"
                            checked={mode === id}
                            onChange={() => setMode(id)}
                            className="size-3 appearance-none rounded-full bg-white checked:border-[3px] checked:border-white checked:bg-[#1b1b1b]"
                        />
                        {label}
                    </label>
                ))}
            </div>
            <p className="flex h-6 items-center rounded bg-[#0d1524] px-2 text-[9px] text-[#64748b]">
                Clique Calcular para aplicar as medidas ao modelo.
            </p>
            <div className="mt-[6px] flex h-[23px] gap-1 font-bold text-white">
                <button type="submit" className="flex-1 rounded-[3px] bg-[#1b6433]">Calcular / Aplicar</button>
                <button type="reset" className="w-[51px] rounded-[3px] bg-[#334155] font-semibold text-[#cbd5e1]">Limpar</button>
                <button type="button" className="w-[38px] rounded-[3px] bg-[#1d4ed8]">DXF</button>
                <button type="button" className="w-11 rounded-[3px] bg-[#1d4ed8]">DWG</button>
            </div>
        </form>
    )
}

const flags = {
    PT: (
        <>
            <path d="M0 0h17v12H0z" fill="#169b3c" />
            <path d="M8.500 1l7 5-7 5-7-5z" fill="#f6dd20" />
            <circle cx="8.500" cy="6" r="2.700" fill="#1b3a8a" />
        </>
    ),
    EN: (
        <>
            <path d="M0 0h17v12H0z" fill="#273a7e" />
            <path d="M0 0l17 12M17 0L0 12" stroke="#ddd" strokeWidth="2.200" />
            <path d="M8.500 0v12M0 6h17" stroke="#ddd" strokeWidth="4" />
            <path d="M8.500 0v12M0 6h17" stroke="#c8202f" strokeWidth="2.200" />
            <path d="M0 0l17 12M17 0L0 12" stroke="#c8202f" strokeWidth="0.800" />
        </>
    ),
    ES: (
        <>
            <path d="M0 0h17v12H0z" fill="#c01818" />
            <path d="M0 3h17v6H0z" fill="#f2b50c" />
        </>
    ),
}

function TaskPane() {
    const [open, setOpen] = useState('07')
    const toggle = (id) => setOpen(open === id ? null : id)

    return (
        <section className="flex w-[329px] shrink-0 flex-col border-b border-l-2 border-[#111] bg-[#f0f0f0]">
            <div className="flex h-[22px] shrink-0 items-center border-b border-[#333] bg-[#abacae] pr-[5px] pl-[9px] text-black">
                <svg viewBox="0 0 12 10" width="12" height="9" fill="none" stroke="#222" strokeWidth="1.500" aria-hidden="true"><path d="M6 1L2 5l4 4M11 1L7 5l4 4" /></svg>
                <h2 className="flex-1 text-center text-[11px] font-bold">MaxDesign3D Expert</h2>
                <Svg size={18} className="mr-1">
                    <g fill="#ddd">{gear}</g>
                </Svg>
                <svg viewBox="0 0 14 14" width="13" height="13" fill="#222" aria-hidden="true"><path d="M8 0l6 6-2 .5-2.500 2.500-.5 3-3-2.500L1 13.500 0 14l.5-1.500L4.500 8 2 5l3-.5L7.500 2z" /></svg>
            </div>
            <div className="mt-[3px] mr-[2px] mb-[3px] ml-[6px] flex min-h-0 flex-1 flex-col bg-[#232323]">
                <div className="flex h-[46px] shrink-0 items-center bg-[#141414] pr-4 pl-[10px] text-[10px] text-[#9a9a9a]">
                    <strong className="pt-[5px] text-[16px] text-white">MxD</strong>
                    <strong className="-mt-2 text-[9px] font-semibold text-[#d8342c]">3D</strong>
                    <span className="pl-[14px] text-[11px]">Expert</span>
                    <div className="ml-auto flex items-center gap-1">
                        {Object.keys(flags).map((lang, i) => (
                            <button key={lang} type="button" className={`flex items-center gap-1 ${i ? '' : 'font-bold text-white'}`}>
                                {i > 0 && <span className="mr-px text-[#777]">|</span>}
                                <svg viewBox="0 0 17 12" width="17" height="12" className={i ? 'opacity-60' : ''} aria-hidden="true">{flags[lang]}</svg>
                                {lang}
                            </button>
                        ))}
                    </div>
                </div>
                <div className="flex min-h-0 flex-1">
                    <div className="-mt-[9px] flex flex-1 flex-col overflow-hidden [clip-path:inset(9px_0_0_0)]">
                        {before.map((item) => <PieceRow key={item.id} item={item} open={open === item.id} onClick={() => toggle(item.id)} />)}
                        {open === '07' && <TubeForm />}
                        {after.map((item) => <PieceRow key={item.id} item={item} open={open === item.id} onClick={() => toggle(item.id)} />)}
                    </div>
                    <div className="w-[17px] bg-[#181818] pt-[185px]">
                        <div className="h-[375px] rounded-[2px] bg-[#585858]" />
                    </div>
                </div>
            </div>
        </section>
    )
}

function Grip() {
    return <span className="mx-1 h-[26px] w-[3px] border-x border-dotted border-[#999]" />
}

function FilterBar() {
    return (
        <div className="flex h-[34px] shrink-0 items-center border-b border-[#868686] pt-0.5">
            <Grip />
            <div className="flex pl-px">
                <IconButton name="Filtro" className="w-[27px]"><Svg dim><path d="M4 5h12v2l-4 4v5H8v-5L4 7z" fill="#999" /></Svg></IconButton>
                <IconButton name="Limpar filtros" className="w-[27px]"><Svg dim><path d="M1 2h10v2L8 7v4H5V7L1 4zM5 6h10v2l-4 4v4M8 10h10v2l-3.500 3v4h-3v-4L8 12z" fill="#fff" /></Svg></IconButton>
                <IconButton name="Todos os filtros" className="w-[27px]"><Svg><path d="M1 1.500h12v3L9 8v4H5V8L1 4.500zM4 5h12v3l-4 4v4H8v-4L4 8zM7 9h12v3l-4 3v4h-4v-4l-4-3z" fill="#c98adf" stroke="#5b2a70" strokeWidth="1.200" /></Svg></IconButton>
            </div>
            <IconButton name="Selecionar" className="h-[26px] w-[29px] border border-[#808080] bg-[#b1b1b1]"><Svg><ArrowShape /></Svg></IconButton>
            <IconButton name="Opções de seleção" className="h-[26px] w-[13px] border border-l-0 border-[#9a9a9a]"><Caret /></IconButton>
            <IconButton name="Inverter seleção" className="w-[27px]"><Svg dim><path d="M2 1v13l3-3 2 5 2-1-2-5h4zM8 2l11 12-5 0 2 4-2 1-3-5-3 2z" fill="#999" /></Svg></IconButton>
            <span className="mx-1 h-[22px] w-px bg-[#999]" />
            <div className="flex">
                {filters.map((item) => (
                    <IconButton key={item.name} name={item.name} className={`h-[26px] w-[27px] ${item.on ? 'border border-[#b0b0b0] bg-white' : ''}`}>
                        <Svg>
                            {item.art}
                            <g stroke="none"><Funnel color={item.pink ? '#b21fc9' : '#9b5fb8'} /></g>
                        </Svg>
                    </IconButton>
                ))}
            </div>
            <span className="ml-2 h-[30px] w-px bg-[#868686]" />
            <Grip />
            <div className="flex pl-0.5">
                {annotations.map((item) => (
                    <IconButton key={item.name} name={item.name} className="w-[27px]"><Svg dim={item.dim}>{item.art}</Svg></IconButton>
                ))}
            </div>
            <span className="ml-2 h-[30px] w-px bg-[#868686]" />
            <Grip />
            <div className="flex">
                <IconButton name="Executar macro" className="w-[27px]"><Svg><path d="M5.500 5l10 5-10 5z" fill="#222" stroke="none" /></Svg></IconButton>
                <IconButton name="Parar macro" className="w-[27px]"><Svg><path d="M5 5h10v10H5z" fill="#bbb" stroke="none" /></Svg></IconButton>
                <IconButton name="Gravar macro" className="w-[27px]"><Svg><path d="M2 5v10M6 5v10" strokeWidth="2" /><circle cx="14" cy="10" r="5" fill="#dc2c10" stroke="none" /></Svg></IconButton>
                <IconButton name="Nova macro" className="w-[27px]">
                    <Svg>
                        <path d="M4 3h9l4 4v12H4zM13 3v4h4" fill="#fff" />
                        <path d="M8 9.500q-1 0-1 2l-.800 1.200.800 1.200q0 2 1 2M13 9.500q1 0 1 2l.800 1.200-.800 1.200q0 2-1 2" />
                        <path d="M9 10.500l3 2.200-3 2.200z" fill={K} stroke="none" />
                        <path d="M4.500 0v8M.5 4h8M1.500 1l6 6M7.500 1l-6 6" stroke="#e09020" />
                    </Svg>
                </IconButton>
                <IconButton name="Editar macro" className="w-[27px]">
                    <Svg>
                        <path d="M1.500 2h17v16h-17z" fill="#fff" />
                        <path d="M1 3h18" stroke="#2a93bd" strokeWidth="3" />
                        <path d="M6 7.500q-1 0-1 2l-.8 1.200.8 1.200q0 2 1 2M8 8.500l4 2.500-4 2.500z" />
                        <path d="M8 18.500l1.500-4L17 7l2.500 2.500-7.500 8z" fill="#e8b64c" strokeWidth="0.900" />
                    </Svg>
                </IconButton>
            </div>
            <span className="ml-2 h-[30px] w-px bg-[#868686]" />
        </div>
    )
}

function StatusBar() {
    return (
        <footer className="flex h-[19px] shrink-0 items-center border-b border-[#868686] pr-6 pl-px text-[11px] text-black">
            <span className="flex-1">SOLIDWORKS Professional 2020 SP5.0</span>
            <span className="w-[176px]">Editing Part</span>
            <button type="button" className="flex items-center gap-4">
                Custom
                <Caret className="rotate-180" />
            </button>
            <Svg size={16} className="ml-[27px]"><path d="M1 6l6-4 12 8-1 5-5 4L1 10zM1 6l12 9 6-5M13 15v4" fill="#eee" strokeWidth="1.500" /><path d="M6 6l6 5M9 5l5 4" strokeWidth="1.500" /></Svg>
        </footer>
    )
}

export default function App() {
    return (
        <div className="flex h-screen min-h-[700px] flex-col overflow-hidden border-l border-[#aaa] bg-[#f7f7f7] font-['Open_Sans',sans-serif] text-[#111]">
            <div className="h-[9px] shrink-0 border-t-[3px] border-b border-t-white border-b-[#868686] bg-[#efefef]" />
            <TitleBar />
            <Ribbon />
            <div className="flex min-h-0 flex-1">
                <div className="flex min-w-0 flex-1 flex-col">
                    <CommandTabs />
                    <div className="flex min-h-0 flex-1">
                        <FeatureTree />
                        <Viewport />
                    </div>
                    <ModelTabs />
                </div>
                <TaskPane />
            </div>
            <FilterBar />
            <StatusBar />
        </div>
    )
}
